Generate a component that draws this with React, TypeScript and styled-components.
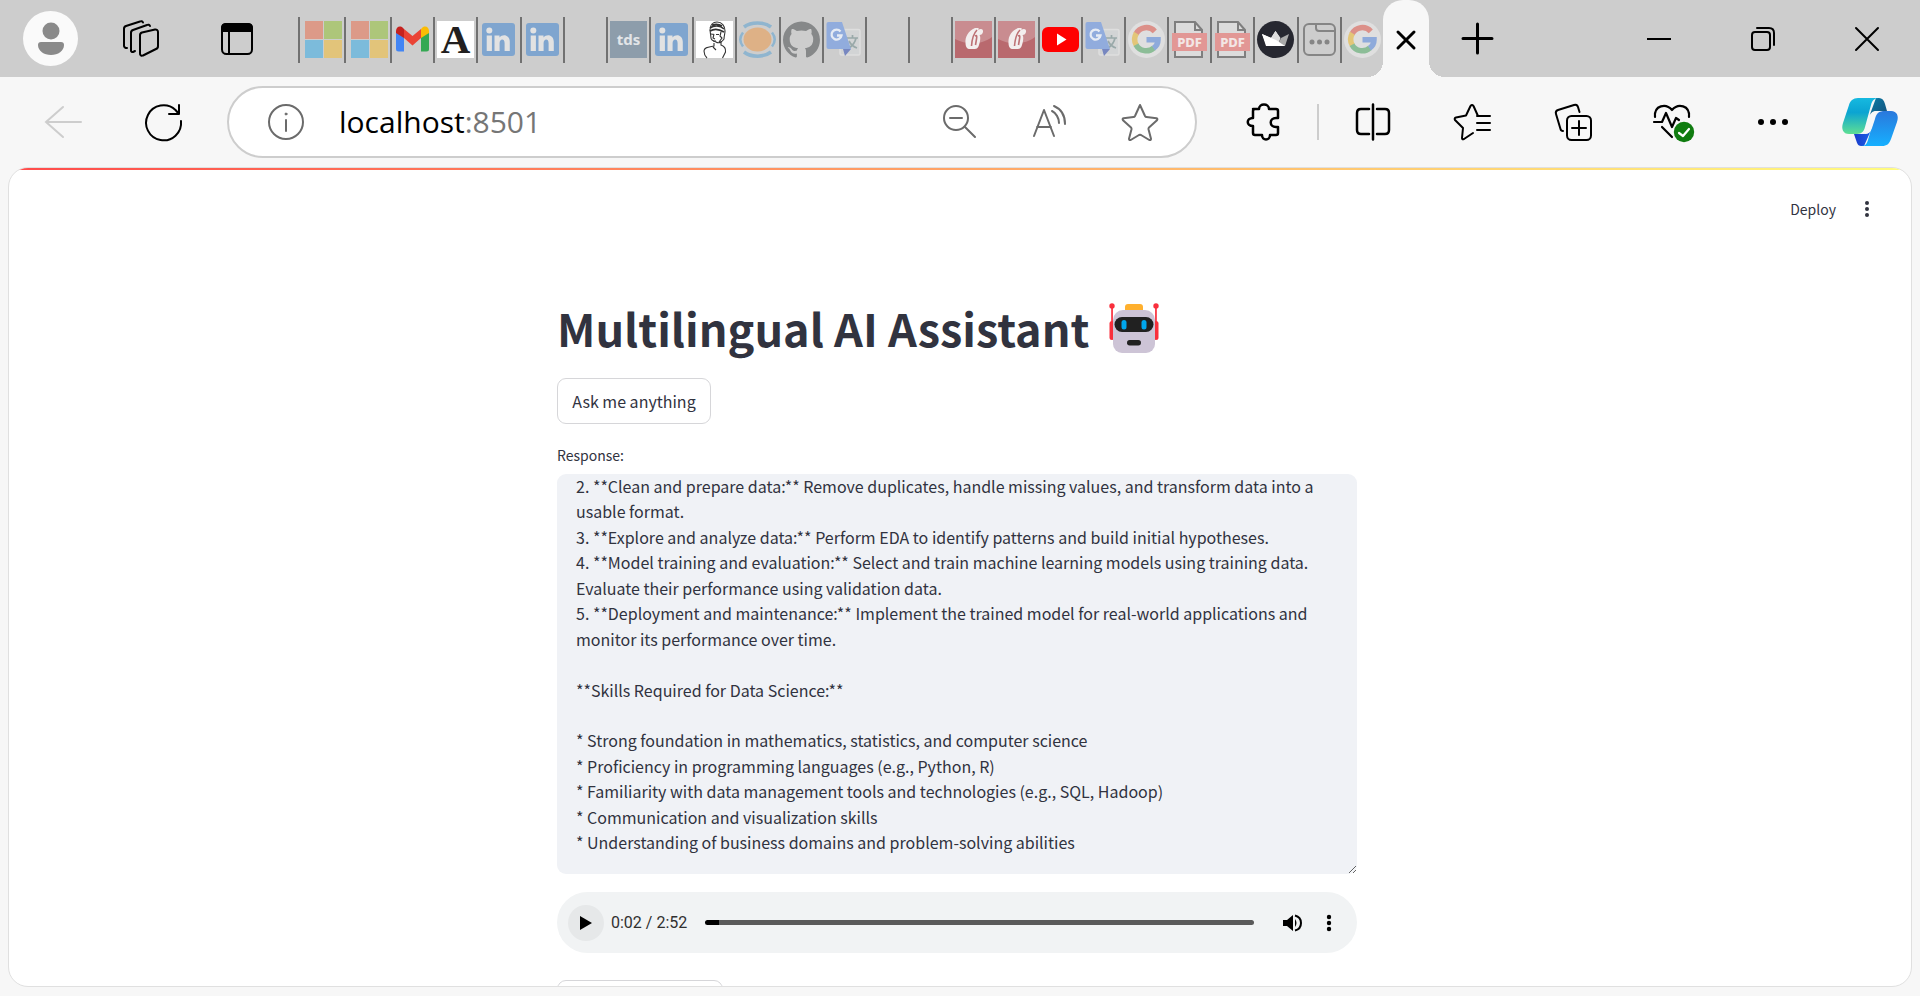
import React from "react";
import styled, { createGlobalStyle } from "styled-components";

const sans = '"Noto Sans CJK SC", "Noto Sans", sans-serif';

const GlobalStyle = createGlobalStyle`
  * { box-sizing: border-box; }
  html, body, #root { height: 100%; }
  body { margin: 0; background: #f7f7f7; font-family: ${sans}; color: #31333f; overflow: hidden; }
  button { font: inherit; color: inherit; background: none; border: 0; padding: 0; margin: 0; cursor: pointer; }
  svg { display: block; flex: none; overflow: visible; }
`;

const Browser = styled.div`
  display: flex;
  flex-direction: column;
  height: 100vh;
`;

/* ---------- Tab strip ---------- */

const TabStrip = styled.div`
  display: flex;
  flex: none;
  height: 77px;
  background: #cdcdcd;
  color: #000;
`;

const StripTools = styled.div`
  display: flex;
  align-items: center;
  flex: none;
  gap: 38px;
  padding-left: 23px;
  width: 298px;
`;

const Avatar = styled.button`
  display: grid;
  place-items: center;
  width: 55px;
  height: 55px;
  border-radius: 50%;
  background: #fafafa;
`;

const IconButton = styled.button<{ $w?: number }>`
  display: flex;
  align-items: center;
  justify-content: center;
  flex: none;
  width: ${(p) => p.$w ?? 38}px;
  height: 50px;
`;

const StripButtons = styled.div`
  display: flex;
  gap: 46px;
  align-items: center;
`;

const Tabs = styled.div`
  display: flex;
  align-items: center;
  flex: 1;
  min-width: 0;
`;

const Tab = styled.button<{ $wide?: boolean }>`
  display: flex;
  align-items: center;
  flex: ${(p) => (p.$wide ? "0 0 46px" : "1 1 0")};
  min-width: 0;
  height: 46px;
  margin-top: 2px;
  padding-left: ${(p) => (p.$wide ? 5 : 2)}px;
  border-left: 2px solid #717171;
`;

const ActiveTab = styled.button`
  position: relative;
  display: grid;
  place-items: center;
  flex: none;
  width: 46px;
  height: 77px;
  padding-top: 2px;
  border-radius: 20px 20px 0 0;
  background: #f7f7f7;
  &::before, &::after {
    content: "";
    position: absolute;
    bottom: 0;
    width: 16px;
    height: 16px;
  }
  &::before { right: 100%; background: radial-gradient(circle at 0 0, transparent 16px, #f7f7f7 16px); }
  &::after { left: 100%; background: radial-gradient(circle at 100% 0, transparent 16px, #f7f7f7 16px); }
`;

const WindowControls = styled.div`
  display: flex;
  align-items: center;
  justify-content: space-between;
  flex: none;
  width: 491px;
  padding: 0 34px 0 29px;
`;

const CaptionButtons = styled.div`
  display: flex;
  gap: 66px;
`;

/* ---------- Toolbar ---------- */

const Toolbar = styled.div`
  display: flex;
  align-items: center;
  flex: none;
  height: 90px;
  padding: 0 31px 0 44px;
  color: #000;
`;

const NavButtons = styled.div`
  display: flex;
  gap: 62px;
  flex: none;
  width: 183px;
`;

const AddressBar = styled.div`
  display: flex;
  align-items: center;
  flex: 1;
  min-width: 0;
  height: 72px;
  padding: 0 36px 0 38px;
  border: 2px solid #cdcdcd;
  border-radius: 36px;
  background: #fff;
  color: #6b6b6b;
`;

const Url = styled.div`
  flex: 1;
  margin-left: 34px;
  font-family: "Open Sans", "Noto Sans", sans-serif;
  font-size: 30px;
  line-height: 40px;
  color: #767676;
  b { font-weight: 400; color: #000; }
`;

const AddressTools = styled.div`
  display: flex;
  gap: 52px;
`;

const ToolbarTools = styled.div`
  display: flex;
  align-items: center;
  justify-content: space-between;
  flex: none;
  width: 692px;
  padding-left: 47px;
`;

const SplitGroup = styled.div`
  display: flex;
  align-items: center;
  gap: 35px;
`;

const Divider = styled.span`
  width: 2px;
  height: 36px;
  background: #cdcdcd;
`;

/* ---------- Page ---------- */

const Page = styled.main`
  flex: 1;
  min-height: 0;
  margin: 0 8px 9px;
  border: 1px solid #e0e0e0;
  border-radius: 20px;
  background: #fff;
  overflow: hidden;
`;

const Decoration = styled.div`
  height: 2px;
  background: linear-gradient(90deg, #ff4b4b, #fffd80);
`;

const Header = styled.header`
  display: flex;
  justify-content: flex-end;
  align-items: center;
  gap: 20px;
  height: 78px;
  padding-right: 33px;
`;

const DeployButton = styled.button`
  font-size: 14px;
  line-height: 24px;
`;

const Scroller = styled.div`
  padding: 48px 6px 0 0;
`;

const Content = styled.div`
  width: 800px;
  max-width: 100%;
  margin: 0 auto;
`;

const Title = styled.h1`
  display: flex;
  align-items: center;
  gap: 20px;
  margin: 0 0 18px;
  font-size: 45px;
  font-weight: 700;
  line-height: 64px;
  white-space: nowrap;
`;

const AppButton = styled.button<{ $w: number }>`
  display: block;
  width: ${(p) => p.$w}px;
  height: 46px;
  border: 1px solid #d6d6d9;
  border-radius: 9px;
  background: #fff;
  font-size: 16px;
  line-height: 24px;
`;

const FieldLabel = styled.label`
  display: block;
  margin: 19px 0 7px;
  font-size: 14px;
  line-height: 24px;
`;

const ResponseBox = styled.textarea`
  display: block;
  width: 100%;
  height: 400px;
  margin: 0;
  padding: 0 19px;
  border: 0;
  border-radius: 9px;
  outline: 0;
  background: #f0f2f6;
  color: #31333f;
  font-family: ${sans};
  font-size: 16px;
  line-height: 1.59;
  overflow: hidden;
  resize: vertical;
`;

const Player = styled.div`
  display: flex;
  align-items: center;
  height: 61px;
  margin: 18px 0 27px;
  padding: 0 17px 0 11px;
  border-radius: 31px;
  background: #f1f3f4;
`;

const PlayButton = styled.button`
  display: grid;
  place-items: center;
  width: 36px;
  height: 36px;
  border-radius: 50%;
  background: #e6e8e9;
`;

const Time = styled.span`
  margin: 0 18px 0 7px;
  font-family: Roboto, sans-serif;
  font-size: 16px;
  line-height: 24px;
  color: #303030;
`;

const Seek = styled.input`
  appearance: none;
  flex: 1;
  min-width: 0;
  height: 5px;
  margin: 0 28px 0 0;
  border-radius: 3px;
  background: linear-gradient(90deg, #000 14px, #5a5a5a 14px);
  &::-webkit-slider-thumb { appearance: none; width: 5px; height: 5px; background: transparent; }
`;

const PlayerTools = styled.div`
  display: flex;
  gap: 14px;
`;

/* ---------- Favicons ---------- */

const Fav = ({ children }: { children: React.ReactNode }) => (
  <svg width="37" height="37" viewBox="0 0 37 37" aria-hidden="true">{children}</svg>
);

const Microsoft = () => (
  <Fav>
    <path fill="#dc9a88" d="M0 0h18v18H0z" /><path fill="#adc67a" d="M19 0h18v18H19z" />
    <path fill="#7cbbdb" d="M0 19h18v18H0z" /><path fill="#e2c47a" d="M19 19h18v18H19z" />
  </Fav>
);
const Gmail = () => (
  <Fav>
    <path fill="#4285f4" d="M2 11v17a2.500 2.500 0 0 0 2.500 2.500H10V16z" />
    <path fill="#34a853" d="M35 11v17a2.500 2.500 0 0 1-2.500 2.500H27V16z" />
    <path fill="#ea4335" d="M10 8l8.500 7L27 8v9l-8.500 7.500L10 17z" />
    <path fill="#c5221f" d="M2 10c0-4 4-6 7-3l1 1v9l-8-5z" />
    <path fill="#fbbc04" d="M35 10c0-4-4-6-7-3l-1 1v9l8-5z" />
  </Fav>
);
const LetterA = () => (
  <Fav>
    <path fill="#fff" d="M0 0h37v37H0z" />
    <text x="18.500" y="32" textAnchor="middle" fontFamily="Liberation Serif, serif" fontWeight="700" fontSize="41" fill="#221f1f">A</text>
  </Fav>
);
const LinkedIn = () => (
  <Fav>
    <rect x="2" y="2" width="33" height="33" rx="3" fill="#7fa5cf" />
    <g fill="#e2e2e2">
      <circle cx="9.300" cy="9.500" r="3" /><path d="M6.700 14.500h5.200v15.500H6.700z" />
      <path d="M14.500 14.500h5v2c3-4 10.300-3 10.300 4.500v9h-5.200v-8c0-5-5-4.500-5 0v8h-5.100z" />
    </g>
  </Fav>
);
const Tds = () => (
  <Fav>
    <path fill="#8d9dab" d="M0 0h37v37H0z" />
    <text x="18.500" y="24" textAnchor="middle" fontFamily="Noto Sans, sans-serif" fontWeight="700" fontSize="15" fill="#e2e5e8">tds</text>
  </Fav>
);
const Bust = () => (
  <Fav>
    <path fill="#fff" d="M0 0h37v37H0z" />
    <g fill="none" stroke="#333" strokeWidth="1.100">
      <path d="M14 9c0-5 3-8 7-8 5 0 8 4 8 9 0 3-1 5-1 8-2 3-5 5-8 3-3-1-5-2-5-4z" />
      <path d="M14 7c4-3 10-3 14 1M14 10c5-3 9-2 14 1M16 4c3-1 7-1 10 1" strokeWidth="1.600" />
      <path d="M15 13l3 .5M20 13.500h3M18 13l-1 4 2 1M17 20h3M25 11l-1 4 2 2-3 4" />
      <path d="M18 22v3c-5 1-10 1-10 5 0 3 1 5 3 7M25 20v4c3 1 5 3 4.500 7l-3 6M17 26l3 3" />
    </g>
  </Fav>
);
const Orbit = () => (
  <Fav>
    <ellipse cx="18.500" cy="18.500" rx="14" ry="12" fill="#deb186" />
    <g fill="none" stroke="#8fb5cf" strokeWidth="3.500">
      <path d="M5 6C12 .5 25 .5 32 6M5 31c7 5.500 20 5.500 27 0" /><path strokeWidth="2.500" d="M4 11.500C.5 16 .5 21 4 25.500M33 11.500c3.500 4.500 3.500 9.500 0 14" />
    </g>
  </Fav>
);
const GitHub = () => (
  <Fav>
    <path fill="#868889" transform="scale(1.54)" d="M12 .297c-6.630 0-12 5.373-12 12 0 5.303 3.438 9.800 8.205 11.385.6.113.82-.258.82-.577 0-.285-.01-1.040-.015-2.040-3.338.724-4.042-1.610-4.042-1.610C4.422 18.070 3.633 17.700 3.633 17.700c-1.087-.744.084-.729.084-.729 1.205.084 1.838 1.236 1.838 1.236 1.070 1.835 2.809 1.305 3.495.998.108-.776.417-1.305.76-1.605-2.665-.3-5.466-1.332-5.466-5.930 0-1.310.465-2.380 1.235-3.220-.135-.303-.54-1.523.105-3.176 0 0 1.005-.322 3.300 1.230.96-.267 1.980-.399 3-.405 1.020.006 2.040.138 3 .405 2.280-1.552 3.285-1.230 3.285-1.230.645 1.653.24 2.873.12 3.176.765.84 1.230 1.910 1.230 3.220 0 4.610-2.805 5.625-5.475 5.920.42.36.81 1.096.81 2.220 0 1.606-.015 2.896-.015 3.286 0 .315.21.69.825.57C20.565 22.092 24 17.592 24 12.297c0-6.627-5.373-12-12-12" />
  </Fav>
);
const Translate = () => (
  <Fav>
    <rect x="14" y="8.500" width="20" height="25.500" rx="1.500" fill="#d2d4d5" stroke="#dedede" strokeWidth="1.500" />
    <path fill="none" stroke="#99a9a9" strokeWidth="1.700" d="M21 17h11M26.500 14v3M30 17c-1 5-4 8-7 10M23 20c2 4 5 6 8 7" />
    <path fill="#91acdd" d="M2.500 1H16l9 27H2.500A2 2 0 0 1 .5 26V3a2 2 0 0 1 2-2z" />
    <path fill="#7787c0" d="M17 28h8l-6 7z" />
    <path fill="none" stroke="#e6ebf4" strokeWidth="2.300" d="M14.500 10.500a5 5 0 1 0 1 4H11" />
  </Fav>
);
const RedCrest = () => (
  <Fav>
    <path fill="#b9696e" d="M0 0h37v37H0z" /><path fill="#c98c90" d="M0 0h37v16c-10 8-26 8-37 2z" />
    <path fill="#f3eeee" d="M20 7c-7 3-10 9-9.500 15 .2 4 1.500 6 4.500 6h5c3 0 4-3 5-8 .5-3 .3-5-.5-6 2 0 3-1 3.500-3 .5-3-2-4-5-2 1-1 1-2 0-2z" />
    <path fill="none" stroke="#bd7175" strokeWidth="1.600" d="M22 9c-4 4-5 9-5.500 16M20 15c2-1 2 0 1.500 3l-1 6" />
  </Fav>
);
const YouTube = () => (
  <Fav>
    <rect y="6" width="37" height="25" rx="6" fill="#f00" /><path fill="#fff" d="M15 12.500l9.500 6-9.500 6z" />
  </Fav>
);
const Google = () => (
  <Fav>
    <circle cx="18.500" cy="18.500" r="18.500" fill="#dfdfdf" />
    <g fill="none" strokeWidth="5.500">
      <path stroke="#dc9089" d="M8 13a11.500 11.500 0 0 1 18.800-2.700" />
      <path stroke="#e3c678" d="M8.400 12.200a11.500 11.500 0 0 0 0 12" />
      <path stroke="#8cbd97" d="M8 23.700a11.500 11.500 0 0 0 18 3" />
      <path stroke="#8eaadb" d="M18.500 18.700H30c0 4-1.500 6.500-4.500 8.500" />
    </g>
  </Fav>
);
const Pdf = () => (
  <Fav>
    <path fill="#dcdcdc" stroke="#7f7f7f" strokeWidth="2" d="M4 1h20l7 8v27H4z" /><path fill="none" stroke="#7f7f7f" strokeWidth="2" d="M24 1v8h7" />
    <path fill="#e29795" d="M1 12h35v18H1z" />
    <text x="18.500" y="25.500" textAnchor="middle" fontFamily="Noto Sans, sans-serif" fontWeight="800" fontSize="13" fill="#f3e6e5">PDF</text>
  </Fav>
);
const Crown = () => (
  <Fav>
    <circle cx="18.500" cy="18.500" r="18.500" fill="#262730" />
    <path fill="#fff" d="M5 13l9 4 4.500-7 4.500 7-13 8z" /><path fill="#ddd" d="M18.500 10l5 7-3 8H9z" /><path fill="#aaa" d="M32 13l-4 12h-8l4-8z" /><path fill="#fff" d="M5 13l4 12h19l-9-6z" />
  </Fav>
);
const WindowIcon = () => (
  <Fav>
    <g fill="none" stroke="#858585" strokeWidth="2"><rect x="3" y="3" width="31" height="31" rx="5" /><path d="M15 3v4q0 3 3 3h16" /></g>
    <g fill="#858585"><circle cx="11" cy="21" r="2.500" /><circle cx="18.500" cy="21" r="2.500" /><circle cx="26" cy="21" r="2.500" /></g>
  </Fav>
);

const openTabs: { name: string; icon?: React.ComponentType; wide?: boolean }[] = [
  { name: "Microsoft", icon: Microsoft, wide: true },
  { name: "Microsoft", icon: Microsoft, wide: true },
  { name: "Gmail", icon: Gmail },
  { name: "Article", icon: LetterA },
  { name: "LinkedIn", icon: LinkedIn },
  { name: "LinkedIn", icon: LinkedIn },
  { name: "New tab" },
  { name: "Towards Data Science", icon: Tds },
  { name: "LinkedIn", icon: LinkedIn },
  { name: "Blog", icon: Bust },
  { name: "Notebook", icon: Orbit },
  { name: "GitHub", icon: GitHub },
  { name: "Translate", icon: Translate },
  { name: "New tab" },
  { name: "New tab" },
  { name: "Results", icon: RedCrest },
  { name: "Results", icon: RedCrest },
  { name: "YouTube", icon: YouTube },
  { name: "Translate", icon: Translate },
  { name: "Google", icon: Google },
  { name: "PDF", icon: Pdf },
  { name: "PDF", icon: Pdf },
  { name: "Streamlit", icon: Crown },
  { name: "Page", icon: WindowIcon },
  { name: "Google", icon: Google },
];

/* ---------- Line icons ---------- */

const Line = ({ w = 38, h = 38, sw = 2, children }: { w?: number; h?: number; sw?: number; children: React.ReactNode }) => (
  <svg width={w} height={h} viewBox={`0 0 ${w} ${h}`} fill="none" stroke="currentColor" strokeWidth={sw} strokeLinecap="round" strokeLinejoin="round" aria-hidden="true">
    {children}
  </svg>
);

const Robot = () => (
  <svg width="50" height="50" viewBox="0 0 50 50" role="img" aria-label="robot">
    <g fill="#f92f3c"><circle cx="3" cy="3" r="2.700" /><circle cx="47" cy="3" r="2.700" /><path d="M2.200 3h1.700v18H2.200zM46.100 3h1.700v18h-1.700z" /><rect x=".5" y="18" width="5" height="19" rx="2.500" /><rect x="44.500" y="18" width="5" height="19" rx="2.500" /></g>
    <rect x="16" y="1" width="18" height="9" rx="3" fill="#ffb02e" />
    <path fill="#cdc4d6" d="M14 7h22a10 10 0 0 1 10 10v24a9 9 0 0 1-9 9H13a9 9 0 0 1-9-9V17A10 10 0 0 1 14 7z" />
    <rect x="5.500" y="14" width="39" height="15" rx="7.500" fill="#212121" />
    <rect x="12.500" y="17" width="5" height="9.500" rx="2.500" fill="#00a6ed" /><rect x="32.500" y="17" width="5" height="9.500" rx="2.500" fill="#00a6ed" />
    <rect x="18" y="37" width="14" height="5.500" rx="2.700" fill="#212121" />
  </svg>
);

const Copilot = () => (
  <svg width="56" height="50" viewBox="0 0 56 50" aria-hidden="true">
    <defs>
      <linearGradient id="cpA" x1="0" y1="0" x2="0" y2="1"><stop offset="0" stopColor="#16b9e0" /><stop offset=".4" stopColor="#0ba4d2" /><stop offset="1" stopColor="#5fdf93" /></linearGradient>
      <linearGradient id="cpB" x1="0" y1="0" x2="0" y2="1"><stop offset="0" stopColor="#2a78dc" /><stop offset="1" stopColor="#16b0ff" /></linearGradient>
      <linearGradient id="cpC" x1="0" y1="0" x2="1" y2="1"><stop offset="0" stopColor="#0a7ea8" /><stop offset="1" stopColor="#174f79" /></linearGradient>
      <linearGradient id="cpD" x1="0" y1="0" x2="1" y2="0"><stop offset="0" stopColor="#1a3ccb" /><stop offset="1" stopColor="#1c62e8" /></linearGradient>
    </defs>
    <path fill="url(#cpC)" d="M34 1h3c3 0 5 2 6 6l2 7H34c-4 0-6 3-7 6z" />
    <path fill="url(#cpD)" d="M22 49h-3c-3 0-4-3-5-6l-2-6h10c5 0 7-3 8-6z" />
    <path fill="url(#cpA)" d="M16 1h21c-5 0-7 3-8 7l-6 22c-1 4-3 7-8 7H7c-6 0-8-5-6-11l6-18c1-4 4-7 9-7z" />
    <path fill="url(#cpB)" d="M41 14h8c6 0 8 5 6 11l-6 17c-2 5-4 7-9 7H19c5 0 6-3 7-6l6-21c1-5 4-8 9-8z" />
    <path fill="#f7f7f7" d="M34 14h7c-5 0-7 4-8 8l-3 9c-1 3-3 6-7 6h-1c2-1 3-4 4-8l3-10c1-3 3-5 5-5z" />
  </svg>
);

const responseText = `2. **Clean and prepare data:** Remove duplicates, handle missing values, and transform data into a usable format.
3. **Explore and analyze data:** Perform EDA to identify patterns and build initial hypotheses.
4. **Model training and evaluation:** Select and train machine learning models using training data. Evaluate their performance using validation data.
5. **Deployment and maintenance:** Implement the trained model for real-world applications and monitor its performance over time.

**Skills Required for Data Science:**

* Strong foundation in mathematics, statistics, and computer science
* Proficiency in programming languages (e.g., Python, R)
* Familiarity with data management tools and technologies (e.g., SQL, Hadoop)
* Communication and visualization skills
* Understanding of business domains and problem-solving abilities`;

export default function App() {
  return (
    <Browser>
      <GlobalStyle />
      <TabStrip>
        <StripTools>
          <Avatar aria-label="Profile">
            <svg width="28" height="34" viewBox="0 0 28 34" fill="#8a8a8a"><circle cx="14" cy="9" r="8.500" /><path d="M4 20h20a3 3 0 0 1 3 3c0 6-6 10-13 10S1 29 1 23a3 3 0 0 1 3-3z" /></svg>
          </Avatar>
          <StripButtons>
            <IconButton $w={50} aria-label="Workspaces">
              <Line>
                <path d="M18 22V15.500a3 3 0 0 1 2-3l13-3a2.500 2.500 0 0 1 3 2.500v14a3 3 0 0 1-2 3l-13 6.500a2 2 0 0 1-3-2z" />
                <path d="M13 31l-2 1a1.500 1.500 0 0 1-2-1.500V13a3 3 0 0 1 2-3l14-5a2 2 0 0 1 3 1M5 28a2.500 2.500 0 0 1-3-2V9a3 3 0 0 1 2-3l14-4.500a2 2 0 0 1 3 1" />
              </Line>
            </IconButton>
            <IconButton $w={50} aria-label="Vertical tabs">
              <Line w={34} h={34}><rect x="2" y="2" width="30" height="30" rx="4.500" /><path d="M9 9v23" /><path fill="currentColor" d="M2 9V6q0-4 4-4h22q4 0 4 4v3z" /></Line>
            </IconButton>
          </StripButtons>
        </StripTools>
        <Tabs>
          {openTabs.map(({ name, icon: Icon, wide }, i) => (
            <Tab key={i} $wide={wide} aria-label={name}>{Icon && <Icon />}</Tab>
          ))}
        </Tabs>
        <ActiveTab aria-label="Close tab"><Line w={20} h={20} sw={3}><path d="M2 2l16 16M18 2L2 18" /></Line></ActiveTab>
        <WindowControls>
          <IconButton aria-label="New tab"><Line w={33} h={33} sw={3}><path d="M16.500 2v29M2 16.500h29" /></Line></IconButton>
          <CaptionButtons>
            <IconButton aria-label="Minimize"><Line w={24} h={24}><path strokeLinecap="butt" d="M0 12h24" /></Line></IconButton>
            <IconButton aria-label="Restore"><Line w={24} h={24}><rect x="1" y="5" width="18" height="18" rx="3" /><path d="M6 1h12q5 0 5 5v12" /></Line></IconButton>
            <IconButton aria-label="Close"><Line w={24} h={24}><path d="M1 1l22 22M23 1L1 23" /></Line></IconButton>
          </CaptionButtons>
        </WindowControls>
      </TabStrip>

      <Toolbar>
        <NavButtons>
          <IconButton aria-label="Back"><svg width="38" height="34" viewBox="0 0 38 34" fill="none" stroke="#cdcdcd" strokeWidth="2" strokeLinecap="round"><path d="M19 2L2 17l17 15M2 17h35" /></svg></IconButton>
          <IconButton aria-label="Refresh"><Line><path d="M37 18a17.500 17.500 0 1 1-5.500-11L35 11M35 2v9h-10" /></Line></IconButton>
        </NavButtons>
        <AddressBar>
          <Line><circle cx="19" cy="19" r="17" /><path d="M19 17v11" /><circle cx="19" cy="11" r="1" fill="currentColor" strokeWidth="1" /></Line>
          <Url><b>localhost</b>:8501</Url>
          <AddressTools>
            <IconButton aria-label="Zoom"><Line w={34} h={34}><circle cx="13" cy="13" r="12" /><path d="M22 22l10 10M7 13h12" /></Line></IconButton>
            <IconButton aria-label="Read aloud"><Line w={36} h={36}><path d="M2 32L12 6l10 26M5 23h14M20 7c4 2 7 7 7 12M22 2c7 3 11 9 11 18" /></Line></IconButton>
            <IconButton aria-label="Favorite"><Line w={38} h={38}><path d="M19 2l5 11q.5 1 1.500 1l10 1.200q1.500.5.5 2l-8 7.300q-.7.7-.5 1.700l2.500 9.500q0 1.700-1.700 1.300L20 32q-1-.5-2 0L9.700 37Q8 37.400 8 35.700l2.500-9.500q.2-1-.5-1.700l-8-7.300q-1-1.500.5-2L12.500 14q1 0 1.500-1z" /></Line></IconButton>
          </AddressTools>
        </AddressBar>
        <ToolbarTools>
          <SplitGroup>
            <IconButton aria-label="Extensions">
              <Line w={34} h={38} sw={2.5}><path d="M7 6h6c0-6 10-6 10 0h7q2 0 2 2v7h-2c-7 0-7 9 0 9h2v6q0 2-2 2h-6c0 6-8 6-8 0H9q-2 0-2-2v-7c-7 0-7-8 0-8V8q0-2 2-2z" /></Line>
            </IconButton>
            <Divider />
            <IconButton aria-label="Split screen"><Line w={36} h={38} sw={2.5}><path d="M14 6H6q-4 0-4 4v17q0 4 4 4h8M22 6h8q4 0 4 4v17q0 4-4 4h-8M18 1.500v35" /></Line></IconButton>
          </SplitGroup>
          <IconButton $w={42} aria-label="Favorites"><Line><path d="M24 13h13M24 20h13M24 27h13M20 30l-9 6q-2 1-2-1l1-10-8-8q-1-2 1-2.500l10-2L17.500 3q1.500-2 3 0L25 13" /></Line></IconButton>
          <IconButton $w={42} aria-label="Collections"><Line><path d="M9 28q-2 0-2.500-2L2 11q-1-3 2-4l16-5q3-1 4 2l1.500 5" /><rect x="13" y="13" width="24" height="24" rx="4.500" /><path d="M25 18v14M18 25h14" /></Line></IconButton>
          <IconButton $w={42} aria-label="Browser essentials">
            <svg width="42" height="38" viewBox="0 0 42 38" fill="none" stroke="#000" strokeWidth="2.200" strokeLinecap="round" strokeLinejoin="round">
              <path d="M2 14C1 2 13 0 19 7c6-7 18-5 17 7M9 24l10 10M1 19h8l4-9 6 14 4-9 3 2" /><circle cx="31" cy="29" r="10.200" fill="#107c10" stroke="none" /><path stroke="#fff" d="M26 30l4 3 6-7" />
            </svg>
          </IconButton>
          <IconButton aria-label="Settings and more"><svg width="32" height="8" viewBox="0 0 32 8"><circle cx="4" cy="4" r="3" /><circle cx="16" cy="4" r="3" /><circle cx="28" cy="4" r="3" /></svg></IconButton>
          <IconButton aria-label="Copilot"><Copilot /></IconButton>
        </ToolbarTools>
      </Toolbar>

      <Page>
        <Decoration />
        <Header>
          <DeployButton>Deploy</DeployButton>
          <IconButton $w={22} aria-label="Main menu"><svg width="6" height="18" viewBox="0 0 6 18" fill="#31333f"><circle cx="3" cy="3" r="2" /><circle cx="3" cy="9" r="2" /><circle cx="3" cy="15" r="2" /></svg></IconButton>
        </Header>
        <Scroller>
          <Content>
            <Title>Multilingual AI Assistant <Robot /></Title>
            <AppButton $w={154}>Ask me anything</AppButton>
            <FieldLabel htmlFor="response">Response:</FieldLabel>
            <ResponseBox id="response" defaultValue={responseText} spellCheck={false} />
            <Player>
              <PlayButton aria-label="Play"><svg width="12" height="14" viewBox="0 0 12 14"><path d="M0 0l12 7-12 7z" /></svg></PlayButton>
              <Time>0:02 / 2:52</Time>
              <Seek type="range" min={0} max={172} defaultValue={2} aria-label="Seek" />
              <PlayerTools>
                <IconButton $w={22} aria-label="Mute"><svg width="20" height="18" viewBox="0 0 20 18"><path d="M0 6h4l6-5v16l-6-5H0z" /><path d="M12 5q3 4 0 8z" /><path d="M12 1.500c8 2 8 13 0 15" fill="none" stroke="#000" strokeWidth="2" /></svg></IconButton>
                <IconButton $w={22} aria-label="More"><svg width="6" height="18" viewBox="0 0 6 18"><circle cx="3" cy="3" r="2.200" /><circle cx="3" cy="9" r="2.200" /><circle cx="3" cy="15" r="2.200" /></svg></IconButton>
              </PlayerTools>
            </Player>
            <AppButton $w={166} aria-label="Download" />
          </Content>
        </Scroller>
      </Page>
    </Browser>
  );
}
